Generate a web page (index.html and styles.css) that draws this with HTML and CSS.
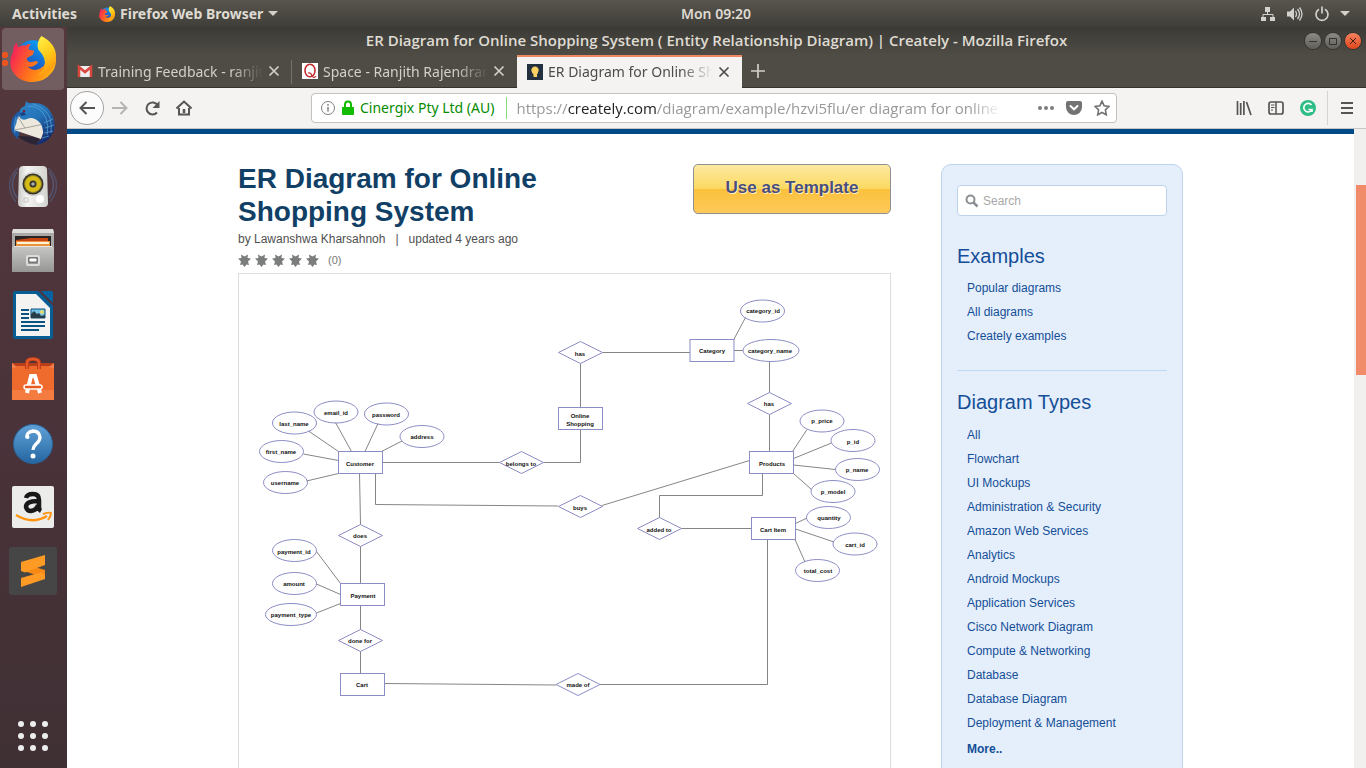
FILE: index.html
```html
<!DOCTYPE html>
<html lang="en">
<head>
<meta charset="utf-8">
<title>ER Diagram for Online Shopping System</title>
<link rel="stylesheet" href="styles.css">
</head>
<body>
<header class="topbar">
  <div class="topbar-left">
    <button class="bar-btn">Activities</button>
    <button class="bar-btn app-menu">
      <svg width="16" height="16" viewBox="0 0 44 44"><use href="#firefox"/></svg>
      Firefox Web Browser
      <svg width="10" height="5" viewBox="0 0 10 5"><path d="M0 0h10L5 5z" fill="#d3d1cc"/></svg>
    </button>
  </div>
  <time class="clock">Mon 09:20</time>
  <button class="bar-btn tray" aria-label="System menu">
    <svg width="16" height="16" viewBox="0 0 16 16" fill="#d3d1cc"><path d="M5 1h5v5H5zM1 11h5v4H1zM10 11h5v4h-5z"/><path d="M7.500 6v3M3 11V8.500h10V11" fill="none" stroke="#d3d1cc"/></svg>
    <svg width="18" height="16" viewBox="0 0 18 16"><path d="M1 5.500h3L8 1.500v13L4 10.500H1z" fill="#d3d1cc"/><path d="M9.500 5q2 3 0 6M11.500 3q4 5 0 10M13.500 1.500q5 6.500 0 13" fill="none" stroke="#d3d1cc" stroke-width="1.300"/></svg>
    <svg width="16" height="16" viewBox="0 0 16 16" fill="none" stroke="#d3d1cc" stroke-width="1.700"><path d="M5 3.200a6 6 0 1 0 6 0M8 .5v7"/></svg>
    <svg width="10" height="5" viewBox="0 0 10 5"><path d="M0 0h10L5 5z" fill="#d3d1cc"/></svg>
  </button>
</header>

<div class="desktop">
  <nav class="dock" aria-label="Dock">
    <button class="tile active" aria-label="Firefox">
      <svg width="46" height="46" viewBox="0 0 44 44">
        <defs>
          <linearGradient id="ffBody" x1="0" y1=".3" x2="1" y2=".7"><stop offset="0" stop-color="#f5215b"/><stop offset=".45" stop-color="#ff6a1f"/><stop offset="1" stop-color="#ffb80f"/></linearGradient>
          <linearGradient id="ffTail" x1="0" y1="0" x2=".4" y2="1"><stop offset="0" stop-color="#fff44a"/><stop offset=".6" stop-color="#ffca1a"/><stop offset="1" stop-color="#ff9a10"/></linearGradient>
          <linearGradient id="ffGlobe" x1="0" y1="1" x2=".6" y2="0"><stop offset="0" stop-color="#2a2a9c"/><stop offset="1" stop-color="#0a9cf5"/></linearGradient>
          <g id="firefox">
            <circle cx="22" cy="21" r="17" fill="url(#ffGlobe)"/>
            <path d="M6 6l2 5q3-3 7-2 3-2 5-1-3 3-2 5l5 1-1 4-6 3q0 3 3 4 4 0 6-1l2 1q-5 6-11 4 8 7 16 0 4-5 3-12l9 0q1 12-4 18-7 9-18 9Q7 44 1 31-1 22 3 15q0-5 3-9z" fill="url(#ffBody)"/>
            <path d="M30 0q-5 6-3 13 8 8 6 16-2 6-7 8 17-1 18-17 0-13-14-20z" fill="url(#ffTail)"/>
          </g>
        </defs>
        <use href="#firefox"/>
      </svg>
      <span class="running"></span>
    </button>
    <button class="tile" aria-label="Thunderbird">
      <svg width="48" height="48" viewBox="0 0 48 48">
        <defs><linearGradient id="tb" x1="0" y1="0" x2=".6" y2="1"><stop offset="0" stop-color="#2f86c9"/><stop offset=".5" stop-color="#2473b8"/><stop offset="1" stop-color="#152a6c"/></linearGradient></defs>
        <path d="M12 11Q2 16 2 27q0 8 7 13l3-14q-3-8 2-15z" fill="#1d5ba4"/>
        <path d="M8 37q9 7 19 9l5-8z" fill="#2a2434"/>
        <path d="M9 18l20-3 8 11-5 14-27-9z" fill="#ece8de"/>
        <path d="M9 18l7 11 19-4M16 29L5 31" fill="none" stroke="#a9a397"/>
        <path d="M11 14q-1-5 5-7l1-5q2 3 6 2 12-1 18 8 9 14 1 25-5 8-16 9 9-6 8-14-1-9-8-12-4-2-8 0-4 2-7-1z" fill="url(#tb)"/>
        <path d="M19 7q13 0 18 12 3 8 1 17M24 5q13 4 17 14 2 7 1 15M35 24l9-4M36 29l9-3M35 34l9-2M33 39l7-2M7 18q-3 8-1 16M10 16q-3 5-3 9" fill="none" stroke="#5aa9dd" opacity=".7"/>
        <path d="M11 14l4-1 2 3-5 1z" fill="#1a3f84"/><circle cx="15" cy="12" r="1.300" fill="#7c2138"/>
      </svg>
    </button>
    <button class="tile" aria-label="Rhythmbox">
      <svg width="48" height="48" viewBox="0 0 48 48">
        <defs><linearGradient id="spk" x1="0" x2="1"><stop offset="0" stop-color="#c8c8c5"/><stop offset=".3" stop-color="#f5f5f4"/><stop offset="1" stop-color="#d2d2cf"/></linearGradient></defs>
        <g fill="none" stroke="#576d9b" stroke-width="1.500"><path d="M9 5Q-7 20 7 39M39 5q16 15 2 34" opacity=".45"/><path d="M8 9q-9 12 0 26M40 9q9 12 0 26" opacity=".6"/></g>
        <path d="M10 6q1-3 4-3h20q3 0 4 3l1 34q0 4-4 4H13q-4 0-4-4z" fill="url(#spk)"/>
        <circle cx="24" cy="21" r="12" fill="#d4d4d0"/><circle cx="24" cy="21" r="10.500" fill="#36342b"/><circle cx="24" cy="21" r="8.500" fill="#d7bb17"/><circle cx="24" cy="21" r="8.500" fill="none" stroke="#877b21"/><circle cx="24" cy="21" r="3.500" fill="#35342e"/><circle cx="24" cy="21" r="1.800" fill="#a8aaa8"/>
        <circle cx="31" cy="36" r="4" fill="#fff"/><path d="M15 35h4v4h-4z" fill="none" stroke="#c6c6c4"/>
      </svg>
    </button>
    <button class="tile" aria-label="Files">
      <svg width="48" height="48" viewBox="0 0 48 48">
        <defs><linearGradient id="cab" x1="0" y1="0" x2="0" y2="1"><stop offset="0" stop-color="#c7c7c5"/><stop offset="1" stop-color="#969694"/></linearGradient></defs>
        <path d="M4 2h40l1 4v37H3V6z" fill="#aaa9a7"/><path d="M4 2h40l1 4H3z" fill="#deddda"/>
        <path d="M6 9h36v12H6z" fill="#272423"/><path d="M7 13l15-2h17v8H7z" fill="#c54612"/><path d="M7 14h34v5H7z" fill="#e99238"/><path d="M8 15h32v2H8z" fill="#fff0dc"/>
        <path d="M5 19h38l2 2v24H3V21z" fill="url(#cab)"/><path d="M5 19h38v1H5z" fill="#e5e5e2"/>
        <rect x="18" y="29" width="12" height="9" rx="1" fill="#999" stroke="#dcdcda" stroke-width="2"/><path d="M20 31h8v4h-8z" fill="#fff" stroke="#333" stroke-width=".7"/>
      </svg>
    </button>
    <button class="tile" aria-label="LibreOffice Writer">
      <svg width="48" height="48" viewBox="0 0 48 48">
        <path d="M6 0h23l15 15v31q0 2-2 2H6q-2 0-2-2V2q0-2 2-2z" fill="#075e94"/><path d="M32 0h10q2 0 2 2v10z" fill="#0763a2"/>
        <path d="M7 3h20l14 14v28H7z" fill="#f4f3f2"/>
        <path d="M12 19h8M12 23h8M12 27h8M12 31h24M12 35h24M12 39h18" stroke="#0a5382" stroke-width="2"/>
        <path d="M22 18h14v9H22z" fill="#72c3e6" stroke="#0a5382"/><circle cx="33" cy="21" r="2" fill="#e9dc69"/><path d="M22 27v-4l3-3 3 3 2-1 2 3 4-1v3z" fill="#273d47"/>
      </svg>
    </button>
    <button class="tile" aria-label="Ubuntu Software">
      <svg width="48" height="48" viewBox="0 0 48 48">
        <path d="M3 8h42v5H3z" fill="#b7401b"/><path d="M3 11h42v34H3z" fill="#ee6a2d"/><path d="M3 35h42v10H3z" fill="#f57c40"/><path d="M3 8l5 4-5 2zM45 8l-5 4 5 2z" fill="#f17d49"/>
        <path d="M18 14V8q0-4 6-4t6 4v6" fill="none" stroke="#bd3e17" stroke-width="4"/><path d="M18 14V8q0-4 6-4t6 4v6" fill="none" stroke="#e5592a" stroke-width="2"/>
        <path d="M18 38l4-17h4l5 17" fill="none" stroke="#fff" stroke-width="4"/><rect x="15" y="30" width="18" height="4" rx="2" fill="#e85a20" stroke="#fff" stroke-width="1.500"/>
      </svg>
    </button>
    <button class="tile" aria-label="Help">
      <svg width="48" height="48" viewBox="0 0 48 48">
        <defs><linearGradient id="hlp" x1="0" y1="0" x2="0" y2="1"><stop offset="0" stop-color="#60a2d6"/><stop offset="1" stop-color="#2566a2"/></linearGradient></defs>
        <circle cx="24" cy="25" r="19.500" fill="url(#hlp)" stroke="#28659c"/><path d="M18 19q-1-6 6-7 6 0 7 6 0 4-4 7-3 3-3 6" fill="none" stroke="#fff" stroke-width="3.300"/><circle cx="18.500" cy="18" r="2" fill="#fff"/><circle cx="24" cy="37" r="2.500" fill="#fff"/>
      </svg>
    </button>
    <button class="tile" aria-label="Amazon">
      <svg width="48" height="48" viewBox="0 0 48 48">
        <rect x="3" y="3" width="42" height="42" rx="2" fill="#ececeb"/>
        <path d="M17 15q1-4 7-4 6 0 6 6v7q0 3 2 4M29 18q-12 0-12 6 1 4 5 4 6-1 7-6" fill="none" stroke="#191919" stroke-width="4.500"/>
        <path d="M7 32q16 10 31 1" fill="none" stroke="#ff9411" stroke-width="2.300"/><path d="M34 31q7-2 8-1 0 3-3 7" fill="none" stroke="#ff9411" stroke-width="2"/>
      </svg>
    </button>
    <button class="tile" aria-label="Sublime Text">
      <svg width="48" height="48" viewBox="0 0 48 48"><rect width="48" height="48" rx="3" fill="#464646"/><path d="M12 23l24 8v-8L12 16z" fill="#f58914"/><path d="M12 15v9l4 1.500L36 18V8zM12 31v9l24-8v-3l-3-4z" fill="#ff9a25"/></svg>
    </button>
    <button class="tile apps" aria-label="Show Applications">
      <svg width="32" height="32" viewBox="0 0 32 32" fill="#eee"><circle cx="4" cy="4" r="3"/><circle cx="16" cy="4" r="3"/><circle cx="28" cy="4" r="3"/><circle cx="4" cy="16" r="3"/><circle cx="16" cy="16" r="3"/><circle cx="28" cy="16" r="3"/><circle cx="4" cy="28" r="3"/><circle cx="16" cy="28" r="3"/><circle cx="28" cy="28" r="3"/></svg>
    </button>
  </nav>

  <section class="window">
    <div class="titlebar">
      <span class="window-title">ER Diagram for Online Shopping System ( Entity Relationship Diagram) | Creately - Mozilla Firefox</span>
      <div class="window-controls">
        <button class="wbtn" aria-label="Minimize"><svg width="16" height="16" viewBox="0 0 16 16"><path d="M4 8.500h8" stroke="#34332f"/></svg></button>
        <button class="wbtn" aria-label="Maximize"><svg width="16" height="16" viewBox="0 0 16 16"><path d="M4.500 5.500h7v6h-7z" fill="none" stroke="#34332f"/></svg></button>
        <button class="wbtn close" aria-label="Close window"><svg width="16" height="16" viewBox="0 0 16 16"><path d="M5 5l6 6M11 5l-6 6" stroke="#44200f"/></svg></button>
      </div>
    </div>
    <div class="tabs">
      <div class="tab">
        <svg width="16" height="16" viewBox="0 0 16 16"><path d="M1 3h14v11H1z" fill="#eee"/><path d="M2 14V4l6 5 6-5v10" fill="none" stroke="#d9473d" stroke-width="2.500"/></svg>
        <span class="tab-label">Training Feedback - ranjit</span>
        <button class="tab-close" aria-label="Close tab"><svg width="12" height="12" viewBox="0 0 12 12"><path d="M1.500 1.500l9 9M10.500 1.500l-9 9" stroke="currentColor" stroke-width="1.700"/></svg></button>
      </div>
      <div class="tab">
        <svg width="16" height="16" viewBox="0 0 16 16"><path d="M0 0h16v16H0z" fill="#fff"/><ellipse cx="8" cy="7.500" rx="5" ry="6.300" fill="none" stroke="#c03030" stroke-width="1.600"/><path d="M6 10q3-1 4 3 2 3 4 0" fill="none" stroke="#c03030" stroke-width="1.300"/></svg>
        <span class="tab-label">Space - Ranjith Rajendran</span>
        <button class="tab-close" aria-label="Close tab"><svg width="12" height="12" viewBox="0 0 12 12"><path d="M1.500 1.500l9 9M10.500 1.500l-9 9" stroke="currentColor" stroke-width="1.700"/></svg></button>
      </div>
      <div class="tab current">
        <svg width="16" height="16" viewBox="0 0 16 16"><path d="M0 0h16v16H0z" fill="#22303f"/><path d="M8 2.500a3.700 3.700 0 0 1 3.700 4Q11 9 10 10.500V13H6.500v-2.500Q5 9 4.300 6.500A3.700 3.700 0 0 1 8 2.500z" fill="#fbd163"/></svg>
        <span class="tab-label">ER Diagram for Online Sh</span>
        <button class="tab-close" aria-label="Close tab"><svg width="12" height="12" viewBox="0 0 12 12"><path d="M1.500 1.500l9 9M10.500 1.500l-9 9" stroke="currentColor" stroke-width="1.700"/></svg></button>
      </div>
      <button class="new-tab" aria-label="New tab"><svg width="14" height="14" viewBox="0 0 14 14"><path d="M7 0v14M0 7h14" stroke="#d0cec8" stroke-width="1.700"/></svg></button>
    </div>
    <div class="toolbar">
      <button class="tool back" aria-label="Back"><svg width="16" height="16" viewBox="0 0 16 16" fill="none" stroke="#555" stroke-width="2"><path d="M16 8H1.500M7.500 2L1.500 8l6 6"/></svg></button>
      <button class="tool" aria-label="Forward"><svg width="16" height="16" viewBox="0 0 16 16" fill="none" stroke="#b5b4b2" stroke-width="2"><path d="M0 8h14.500M8.500 2l6 6-6 6"/></svg></button>
      <button class="tool" aria-label="Reload"><svg width="16" height="16" viewBox="0 0 16 16"><path d="M13 12.500A6 6 0 1 1 13.500 5" fill="none" stroke="#555" stroke-width="2"/><path d="M15.500 1v7h-7z" fill="#555"/></svg></button>
      <button class="tool" aria-label="Home"><svg width="16" height="16" viewBox="0 0 16 16" fill="none" stroke="#555" stroke-width="2"><path d="M.5 8.500L8 1.500l7.500 7M3 8v6.500h10V8"/><path d="M8 9v4" stroke-width="2.500"/></svg></button>
      <div class="urlbar">
        <svg width="16" height="16" viewBox="0 0 16 16"><circle cx="8" cy="8" r="6.500" fill="none" stroke="#808080"/><path d="M8 7v4.500M8 4v1.700" stroke="#808080" stroke-width="1.500"/></svg>
        <svg width="14" height="16" viewBox="0 0 14 16"><rect x="1" y="7" width="12" height="8" rx="1" fill="#12bc00"/><path d="M4 8V4.500a3 3 0 0 1 6 0V8" fill="none" stroke="#12bc00" stroke-width="2"/></svg>
        <span class="identity">Cinergix Pty Ltd (AU)</span>
        <span class="address">https://<b>creately.com</b>/diagram/example/hzvi5flu/er diagram for online s</span>
        <svg width="16" height="16" viewBox="0 0 16 16" fill="#7d7d7d"><circle cx="2" cy="8" r="2"/><circle cx="8" cy="8" r="2"/><circle cx="14" cy="8" r="2"/></svg>
        <svg width="16" height="16" viewBox="0 0 16 16"><path d="M2 1h12q2 0 2 2v4a8 8 0 0 1-16 0V3q0-2 2-2z" fill="#737373"/><path d="M4.500 6L8 9.300 11.500 6" fill="none" stroke="#fff" stroke-width="2" stroke-linecap="round"/></svg>
        <svg width="16" height="16" viewBox="0 0 16 16"><path d="M8 1.200l2.100 4.500 4.900.7-3.600 3.400.9 5L8 12.500l-4.300 2.300.9-5L1 6.400l4.900-.7z" fill="none" stroke="#737373" stroke-width="1.600"/></svg>
      </div>
      <button class="tool" aria-label="Library"><svg width="16" height="16" viewBox="0 0 16 16" fill="none" stroke="#555" stroke-width="1.700"><path d="M1.500 1v14M4.700 3v12M7.900 1v14M10.500 2l4.500 13"/></svg></button>
      <button class="tool" aria-label="Sidebars"><svg width="16" height="16" viewBox="0 0 16 16" fill="none" stroke="#555"><rect x="1" y="2" width="14" height="12" rx="2" stroke-width="1.700"/><path d="M8 2v12" stroke-width="1.500"/><path d="M3 5h3.500M3 7.500h3.500M3 10h2"/></svg></button>
      <button class="tool" aria-label="Grammarly"><svg width="18" height="18" viewBox="0 0 18 18"><circle cx="9" cy="9" r="8" fill="#2dbd85"/><path d="M12.500 6A4.300 4.300 0 1 0 13 10.500H9.500M13 10v3" fill="none" stroke="#fff" stroke-width="1.600"/></svg></button>
      <button class="tool menu" aria-label="Menu"><svg width="12" height="14" viewBox="0 0 12 14"><path d="M0 2h12M0 7h12M0 12h12" stroke="#555" stroke-width="1.800"/></svg></button>
    </div>

    <div class="viewport">
      <div class="page">
        <div class="content">
          <main class="main">
            <div class="head">
              <h1>ER Diagram for Online Shopping System</h1>
              <button class="template-btn">Use as Template</button>
            </div>
            <p class="meta"><span>by Lawanshwa Kharsahnoh</span><span>|</span><span>updated 4 years ago</span></p>
            <div class="rating">
              <svg width="81" height="16" viewBox="0 -1 81 16" fill="#7b7d7c"><defs><path id="star" d="M6.500 14l-2-2.500-2.500.5 1-3.500-3-3 3.500-.5L3 1.500l3.500 2 3.500-2-.5 3.500 3.500.5-3 3 1 3.500-2.500-.5z"/></defs><use href="#star"/><use href="#star" x="17"/><use href="#star" x="34"/><use href="#star" x="51"/><use href="#star" x="68"/></svg>
              <span>(0)</span>
            </div>
            <figure class="diagram">
              <svg viewBox="239 274 651 520" role="img" aria-label="Entity relationship diagram">
                <g class="links">
                  <path d="M602.500 352.500H690M580.500 363.500V407.500M580.500 429.500V462.500H543.500M499.500 462.500H382.500"/>
                  <path d="M733.500 340L745.500 317.500M734 350.500H743M769.500 361.500V392.500M769.500 414.500V451.500"/>
                  <path d="M792.500 451.500L807 429.500M793.500 458.500L831.500 443M793.500 465L835.500 469.500M793.500 473.500L811.500 489.500"/>
                  <path d="M749.500 460.500L602 505.500M762.500 473.500V495.500H659.500V517.500M681.500 528.500H751.500"/>
                  <path d="M795.500 523.500L807 518M795.500 529L834 542M795 539.500L805 562M767.500 539.500V684.500H600"/>
                  <path d="M556 685L384.500 683.500M375.500 473.500V504.500L558 506M359.500 473.500L360.500 524.500M360.500 546.500V583.500M360.500 605V629.500M360.500 651.500V673.500"/>
                  <path d="M308.500 431L338.500 451.500M335.500 422.500L351.500 451.500M378 423.500L365 451.500M402 441L381.500 451.500M303.500 454L338.500 460.500M306.500 481L338.500 473.500M316.500 551.500L340.500 583.500M316.500 584L340.500 594.500M316.500 613L340.500 603.500"/>
                </g>
                <g class="nodes">
                  <rect x="338.500" y="451.500" width="44" height="22"/><rect x="340.500" y="583.500" width="44" height="22"/><rect x="340.500" y="673.500" width="44" height="22"/><rect x="558.500" y="407.500" width="44" height="22"/><rect x="690" y="339.500" width="44" height="22"/><rect x="749.500" y="451.500" width="44" height="22"/><rect x="751.500" y="517.500" width="44" height="22"/>
                  <ellipse cx="336" cy="412" rx="22" ry="11"/><ellipse cx="294.500" cy="423" rx="22" ry="11"/><ellipse cx="281.500" cy="451.500" rx="22" ry="11"/><ellipse cx="285.500" cy="482.500" rx="22" ry="11"/><ellipse cx="386.500" cy="414" rx="22" ry="11"/><ellipse cx="422" cy="436.500" rx="22" ry="11"/><ellipse cx="294.500" cy="550.500" rx="22" ry="11"/><ellipse cx="294.500" cy="583.500" rx="22" ry="11"/><ellipse cx="291" cy="614.500" rx="25.500" ry="11"/>
                  <ellipse cx="762.500" cy="311" rx="22" ry="11"/><ellipse cx="771" cy="350.500" rx="28" ry="11"/><ellipse cx="822" cy="421" rx="22" ry="11"/><ellipse cx="853" cy="440.500" rx="22" ry="11"/><ellipse cx="857.500" cy="469.500" rx="22" ry="11"/><ellipse cx="833" cy="491.500" rx="22" ry="11"/><ellipse cx="828.500" cy="517.500" rx="22" ry="11"/><ellipse cx="855" cy="544" rx="22" ry="11"/><ellipse cx="817.500" cy="570.500" rx="22" ry="11"/>
                  <path d="M558.500 352.500l22-11 22 11-22 11zM747.500 403.500l22-11 22 11-22 11zM499.500 462.500l22-11 22 11-22 11zM558.500 506.500l22-11 22 11-22 11zM637.500 528.500l22-11 22 11-22 11zM338.500 535.500l22-11 22 11-22 11zM338.500 640.500l22-11 22 11-22 11zM556 684.500l22-11 22 11-22 11z"/>
                </g>
                <g class="labels">
                  <text x="336" y="415">email_id</text><text x="294" y="426">last_name</text><text x="281" y="454">first_name</text><text x="285" y="485">username</text><text x="386" y="417">password</text><text x="422" y="439">address</text><text x="360" y="466">Customer</text><text x="521" y="466">belongs to</text><text x="360" y="538">does</text><text x="294" y="554">payment_id</text><text x="294" y="586">amount</text><text x="291" y="617">payment_type</text><text x="363" y="598">Payment</text><text x="360" y="643">done for</text><text x="362" y="687">Cart</text>
                  <text x="580" y="356">has</text><text x="580" y="418">Online</text><text x="580" y="426">Shopping</text><text x="580" y="510">buys</text><text x="578" y="687">made of</text><text x="659" y="532">added to</text><text x="763" y="313">category_id</text><text x="712" y="353">Category</text><text x="770" y="353">category_name</text><text x="769" y="406">has</text><text x="822" y="423">p_price</text><text x="853" y="444">p_id</text><text x="857" y="472">p_name</text><text x="833" y="494">p_model</text><text x="772" y="466">Products</text><text x="773" y="532">Cart Item</text><text x="829" y="520">quantity</text><text x="855" y="547">cart_id</text><text x="818" y="573">total_cost</text>
                </g>
              </svg>
            </figure>
          </main>
          <aside class="side">
            <label class="search">
              <svg width="14" height="14" viewBox="0 0 14 14" fill="none" stroke="#8b8f94"><circle cx="5.500" cy="5.500" r="4" stroke-width="2"/><path d="M8.500 8.500l4 4" stroke-width="2.500"/></svg>
              <input type="search" placeholder="Search" aria-label="Search">
            </label>
            <h2>Examples</h2>
            <ul>
              <li><a href="#">Popular diagrams</a></li>
              <li><a href="#">All diagrams</a></li>
              <li><a href="#">Creately examples</a></li>
            </ul>
            <hr>
            <h2>Diagram Types</h2>
            <ul class="types">
              <li><a href="#">All</a></li>
              <li><a href="#">Flowchart</a></li>
              <li><a href="#">UI Mockups</a></li>
              <li><a href="#">Administration &amp; Security</a></li>
              <li><a href="#">Amazon Web Services</a></li>
              <li><a href="#">Analytics</a></li>
              <li><a href="#">Android Mockups</a></li>
              <li><a href="#">Application Services</a></li>
              <li><a href="#">Cisco Network Diagram</a></li>
              <li><a href="#">Compute &amp; Networking</a></li>
              <li><a href="#">Database</a></li>
              <li><a href="#">Database Diagram</a></li>
              <li><a href="#">Deployment &amp; Management</a></li>
              <li class="more"><a href="#">More..</a></li>
            </ul>
          </aside>
        </div>
      </div>
      <div class="scrollbar"><div class="thumb"></div></div>
    </div>
  </section>
</div>
</body>
</html>
```
FILE: styles.css
```css
* { box-sizing: border-box; }

body {
  margin: 0;
  height: 100vh;
  display: flex;
  flex-direction: column;
  overflow: hidden;
  font-family: "Noto Sans", "Open Sans", sans-serif;
  font-size: 14px;
}

button {
  display: flex;
  align-items: center;
  justify-content: center;
  padding: 0;
  border: 0;
  background: none;
  font: inherit;
  color: inherit;
}

svg { flex: none; }

/* Desktop panel */
.topbar {
  flex: none;
  height: 27px;
  display: grid;
  grid-template-columns: 1fr auto 1fr;
  align-items: center;
  padding: 0 16px 0 12px;
  background: linear-gradient(#58554d, #3f3e39);
  color: #dfdbd2;
  font-weight: 600;
}
.topbar-left { display: flex; gap: 22px; font-weight: 700; }
.app-menu { gap: 5px; }
.clock { padding-left: 70px; }
.tray { justify-self: end; gap: 10px; }

.desktop { flex: 1; min-height: 0; display: flex; }

/* Dock */
.dock {
  flex: none;
  width: 67px;
  display: flex;
  flex-direction: column;
  gap: 2px;
  padding: 1px 3px 1px 2px;
  background: linear-gradient(#54383d, #4b333a 50%, #3f3034);
}
.tile { position: relative; height: 62px; border-radius: 4px; }
.tile.active { background: #725d61; }
.tile.apps { margin-top: auto; }
.running {
  position: absolute;
  left: 0;
  top: 24px;
  width: 6px;
  height: 14px;
  background: radial-gradient(circle at 3px 3px, #e95420 3px, transparent 3px) 0 0 / 6px 8px;
}

/* Browser window */
.window { flex: 1; min-width: 0; display: flex; flex-direction: column; }
.titlebar {
  flex: none;
  height: 28px;
  display: flex;
  align-items: center;
  position: relative;
  justify-content: center;
  padding-bottom: 2px;
  background: linear-gradient(#3b3a36, #4f4c45);
  color: #dfdbd2;
  font-family: "Open Sans", "Noto Sans", sans-serif;
  font-size: 15px;
  font-weight: 600;
}
.window-controls { position: absolute; top: 6px; right: 5px; display: flex; gap: 4px; }
.wbtn { width: 16px; height: 16px; border-radius: 50%; background: linear-gradient(#8b8a84, #5f5e59); box-shadow: 0 0 0 1px #353430; }
.wbtn.close { background: linear-gradient(#f48261, #e0461a); }

.tabs {
  flex: none;
  height: 33px;
  display: flex;
  background: #4f4c45;
  border-bottom: 1px solid #34322e;
}
.tab {
  width: 225px;
  display: flex;
  align-items: center;
  gap: 5px;
  padding: 0 12px 0 10px;
  color: #d2d0ca;
  background: linear-gradient(#75726c, #75726c) right 5px / 1px 24px no-repeat;
}
.tab:nth-child(2) { background: none; }
.tab.current {
  margin-bottom: -1px;
  padding-bottom: 2px;
  background: #f4f3f2;
  border-top: 2px solid #f08763;
  color: #4c4c4c;
}
.tab-label {
  flex: 1;
  min-width: 0;
  white-space: nowrap;
  -webkit-mask-image: linear-gradient(90deg, #000 calc(100% - 32px), transparent);
  mask-image: linear-gradient(90deg, #000 calc(100% - 32px), transparent);
}
.tab-close { width: 12px; height: 12px; }
.new-tab { width: 32px; }

.toolbar {
  flex: none;
  height: 41px;
  display: flex;
  align-items: center;
  background: #f4f3f2;
  border-bottom: 1px solid #c6c5c3;
  padding-left: 3px;
}
.tool { flex: none; width: 32px; height: 34px; }
.back { width: 34px; background: #fcfcfc; border: 1px solid #a3a2a1; border-radius: 50%; }
.urlbar {
  flex: 1;
  min-width: 0;
  height: 30px;
  margin: 0 111px;
  display: flex;
  align-items: center;
  gap: 12px;
  padding: 0 6px 0 8px;
  background: #fff;
  border: 1px solid #c2c1bf;
  border-radius: 4px;
}
.urlbar svg:nth-child(2) { margin-left: -7px; }
.identity { margin-left: -7px; padding-right: 12px; line-height: 22px; color: #058b00; border-right: 1px solid #8bdc80; white-space: nowrap; }
.address {
  flex: 1;
  min-width: 0;
  margin-left: -3px;
  margin-right: 24px;
  white-space: nowrap;
  font-family: "Open Sans", "Noto Sans", sans-serif;
  font-size: 15px;
  color: #999;
  -webkit-mask-image: linear-gradient(90deg, #000 calc(100% - 32px), transparent);
  mask-image: linear-gradient(90deg, #000 calc(100% - 32px), transparent);
}
.address b { font-weight: 400; color: #222; }
.menu { width: 39px; margin-left: 3px; border-left: 1px solid #d4d3d2; }

/* Web page */
.viewport { flex: 1; min-height: 0; display: flex; overflow: hidden; }
.page {
  flex: 1;
  min-width: 0;
  overflow: hidden;
  background: #fff;
  border-top: 5px solid #004b87;
  font-family: "Liberation Sans", Arial, sans-serif;
  font-size: 12px;
}
.scrollbar { flex: none; width: 12px; padding: 56px 0 0 2px; background: #f1f0ef; }
.thumb { height: 190px; background: #f08c69; }

.content { display: flex; gap: 50px; max-width: 945px; margin: 0 auto; padding-top: 30px; }
.main { flex: 1; min-width: 0; }
.head { display: flex; justify-content: space-between; align-items: flex-start; }
h1 { max-width: 340px; margin: -2px 0 0; font-size: 28px; line-height: 33px; color: #113f66; }
.template-btn {
  flex: none;
  width: 198px;
  height: 50px;
  padding-bottom: 3px;
  border: 1px solid #8f8f8f;
  border-radius: 5px;
  background: linear-gradient(#fce9a3, #fbd95f 50%, #fbc13c 50%, #fdc959);
  color: #484d7c;
  font-size: 17px;
  font-weight: 700;
  text-shadow: 1px 1px 0 #fff0c4;
}
.meta { display: flex; gap: 10px; margin: 3px 0 0; line-height: 16px; color: #505050; }
.rating { display: flex; align-items: center; gap: 9px; height: 26px; color: #777; font-size: 11px; }
.diagram { margin: 0; border: 1px solid #dedede; }
.diagram svg { display: block; width: 100%; }
.links { fill: none; stroke: #666; stroke-width: 0.8px; }
.nodes { fill: none; stroke: #8c8cc6; stroke-width: 1px; }
.labels { font-size: 6px; font-weight: 700; fill: #111; text-anchor: middle; }

.side {
  flex: none;
  width: 242px;
  padding: 20px 15px;
  background: #e5effc;
  border: 1px solid #bfd4ea;
  border-radius: 10px;
  color: #144e97;
}
.search {
  height: 31px;
  display: flex;
  align-items: center;
  gap: 4px;
  padding: 0 7px;
  background: #fff;
  border: 1px solid #bdd2ea;
  border-radius: 4px;
}
.search input { flex: 1; min-width: 0; padding: 0; border: 0; outline: 0; background: none; font: inherit; }
.search input::placeholder { color: #a9a9a9; }
h2 { margin: 28px 0 8px; font-size: 20px; line-height: 24px; font-weight: 400; }
ul { margin: 0; padding: 0 0 0 10px; list-style: none; line-height: 24px; }
a { color: inherit; text-decoration: none; }
hr { margin: 22px 0 0; border: 0; border-top: 1px solid #bdd8f5; }
hr + h2 { margin: 19px 0 9px; }
.more { padding-top: 2px; font-weight: 700; }
```
